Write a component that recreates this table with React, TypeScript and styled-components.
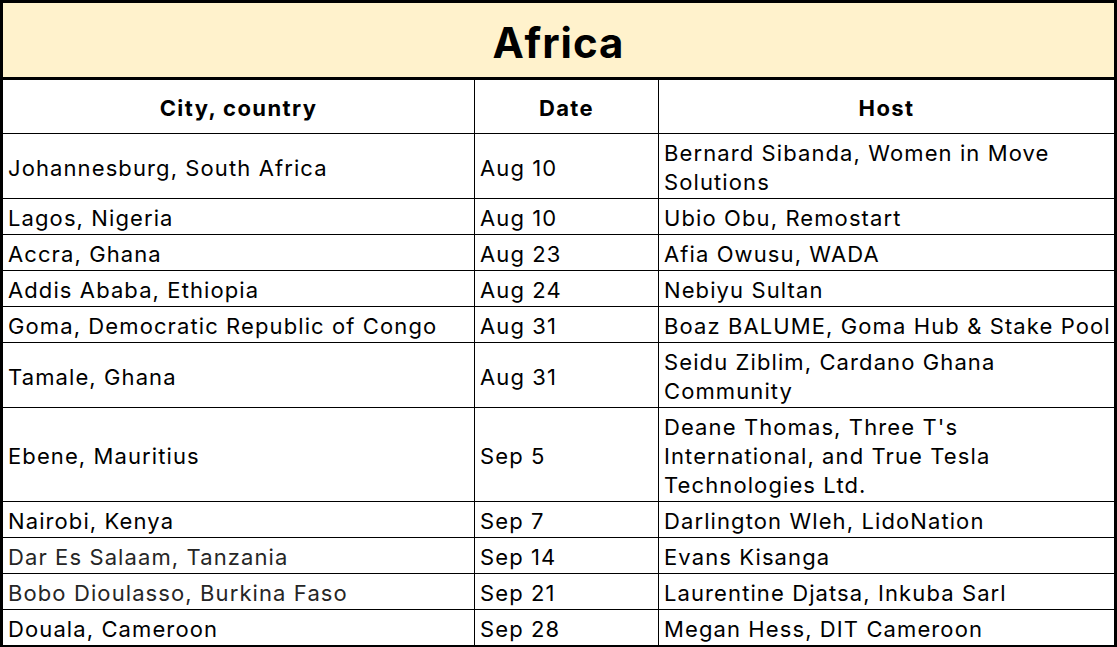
import React from "react";
import styled, { createGlobalStyle } from "styled-components";

const Global = createGlobalStyle`
  html, body { margin: 0; padding: 0; background: #fff; }
  body { font-family: "Inter", "Noto Sans", sans-serif; color: #000; }
`;

const Sheet = styled.table`
  width: 1117px;
  border-collapse: collapse;
  table-layout: fixed;
  border: 3px solid #000;
  box-sizing: border-box;
`;

const TitleCell = styled.th`
  background: #fff2cc;
  height: 70px;
  padding: 4px 0 0;
  border-bottom: 3px solid #000;
  font-size: 42px;
  font-weight: 700;
  letter-spacing: 1px;
  text-align: center;
  vertical-align: middle;
`;

const HeadCell = styled.th`
  height: 50px;
  padding: 3px 0 0;
  border: 1px solid #000;
  font-size: 22px;
  font-weight: 700;
  letter-spacing: 1.4px;
  text-align: center;
  vertical-align: middle;
`;

const Cell = styled.td<{ $muted?: boolean }>`
  padding: 5px 5px 1px;
  border: 1px solid #000;
  font-size: 22px;
  letter-spacing: 1.1px;
  line-height: 29px;
  vertical-align: middle;
  white-space: nowrap;
  color: ${(p) => (p.$muted ? "#262626" : "#000")};
`;

const Line = styled.div`
  display: block;
`;

type Row = { city: string; date: string; host: string[]; muted?: boolean };

const rows: Row[] = [
  { city: "Johannesburg, South Africa", date: "Aug 10", host: ["Bernard Sibanda, Women in Move", "Solutions"] },
  { city: "Lagos, Nigeria", date: "Aug 10", host: ["Ubio Obu, Remostart"] },
  { city: "Accra, Ghana", date: "Aug 23", host: ["Afia Owusu, WADA"] },
  { city: "Addis Ababa, Ethiopia", date: "Aug 24", host: ["Nebiyu Sultan"] },
  { city: "Goma, Democratic Republic of Congo", date: "Aug 31", host: ["Boaz BALUME, Goma Hub & Stake Pool"] },
  { city: "Tamale, Ghana", date: "Aug 31", host: ["Seidu Ziblim, Cardano Ghana", "Community"] },
  { city: "Ebene, Mauritius", date: "Sep 5", host: ["Deane Thomas, Three T's", "International, and True Tesla", "Technologies Ltd."] },
  { city: "Nairobi, Kenya", date: "Sep 7", host: ["Darlington Wleh, LidoNation"] },
  { city: "Dar Es Salaam, Tanzania", date: "Sep 14", host: ["Evans Kisanga"], muted: true },
  { city: "Bobo Dioulasso, Burkina Faso", date: "Sep 21", host: ["Laurentine Djatsa, Inkuba Sarl"], muted: true },
  { city: "Douala, Cameroon", date: "Sep 28", host: ["Megan Hess, DIT Cameroon"] },
];

export default function App() {
  return (
    <>
      <Global />
      <Sheet>
        <colgroup>
          <col style={{ width: 473 }} />
          <col style={{ width: 184 }} />
          <col />
        </colgroup>
        <thead>
          <tr>
            <TitleCell colSpan={3}>Africa</TitleCell>
          </tr>
          <tr>
            <HeadCell>City, country</HeadCell>
            <HeadCell>Date</HeadCell>
            <HeadCell>Host</HeadCell>
          </tr>
        </thead>
        <tbody>
          {rows.map((r) => (
            <tr key={r.city}>
              <Cell $muted={r.muted}>{r.city}</Cell>
              <Cell>{r.date}</Cell>
              <Cell>
                {r.host.map((h) => (
                  <Line key={h}>{h}</Line>
                ))}
              </Cell>
            </tr>
          ))}
        </tbody>
      </Sheet>
    </>
  );
}
